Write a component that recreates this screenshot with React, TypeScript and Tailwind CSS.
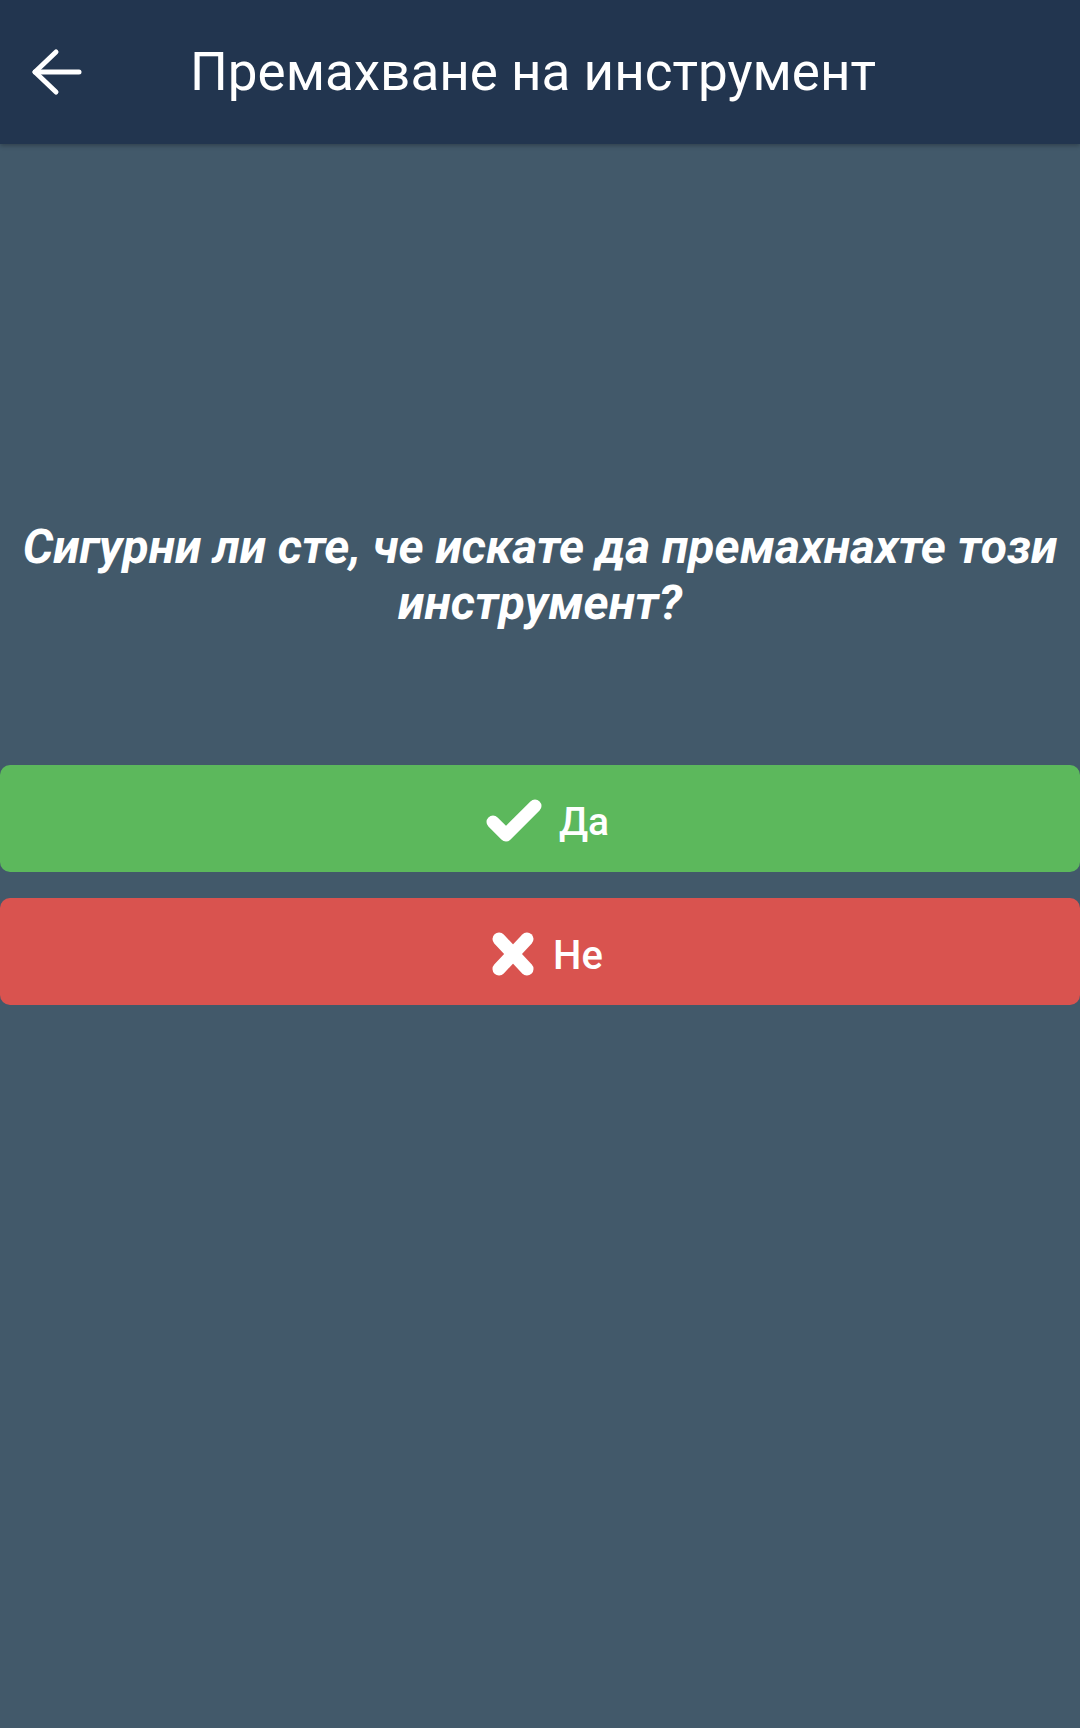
export default function App() {
  return (
    <div className="min-h-[1728px] w-[1080px] bg-[#42596a] font-['Roboto','Liberation_Sans',sans-serif] text-white">
      {/* header */}
      <header className="flex h-[144px] items-center bg-[#22354f] shadow-[0_2px_4px_rgba(0,0,0,0.25)]">
        <button className="flex h-[144px] w-[120px] items-center pl-[30px]" aria-label="Назад">
          <svg width="56" height="48" viewBox="0 0 56 48" fill="none" stroke="currentColor" strokeWidth="5" strokeLinecap="round" strokeLinejoin="round">
            <path d="M26 4 L5 24 L26 44" />
            <path d="M5 24 H49" />
          </svg>
        </button>
        <h1 className="ml-[70px] text-[53px] leading-none font-normal">Премахване на инструмент</h1>
      </header>

      {/* question */}
      <p className="mt-[375px] px-[16px] text-center text-[48px] leading-[56px] font-bold italic">
        Сигурни ли сте, че искате да премахнахте този инструмент?
      </p>

      {/* actions */}
      <div className="mt-[134px] flex flex-col gap-[26px]">
        <button className="flex h-[107px] w-full items-center justify-center gap-[16px] rounded-[10px] bg-[#5cb85c] pl-[14px] pt-[4px]">
          <svg width="58" height="46" viewBox="0 0 58 46" fill="none" stroke="currentColor" strokeWidth="13" strokeLinecap="round" strokeLinejoin="round">
            <path d="M8 24 L21 37 L50 8" />
          </svg>
          <span className="mt-[4px] text-[39px] leading-none font-medium">Да</span>
        </button>
        <button className="flex h-[107px] w-full items-center justify-center gap-[18px] rounded-[10px] bg-[#d9534f] pl-[14px] pt-[4px]">
          <svg width="44" height="46" viewBox="0 0 44 46" fill="none" stroke="currentColor" strokeWidth="13" strokeLinecap="round">
            <path d="M8 8 L36 38" />
            <path d="M36 8 L8 38" />
          </svg>
          <span className="mt-[4px] text-[40px] leading-none font-medium">Не</span>
        </button>
      </div>
    </div>
  )
}
